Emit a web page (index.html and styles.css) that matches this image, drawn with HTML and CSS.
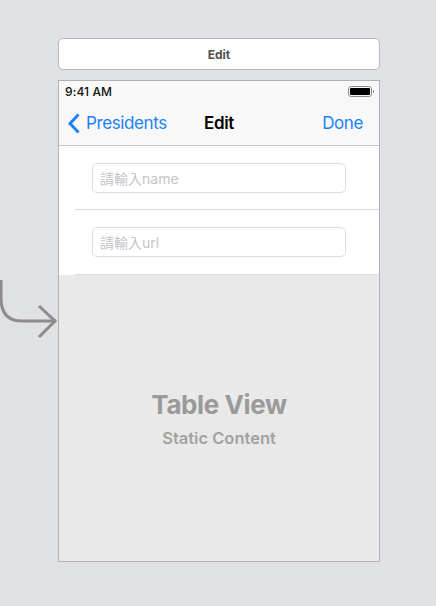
FILE: index.html
```html
<!DOCTYPE html>
<html>
<head>
<meta charset="utf-8">
<link rel="stylesheet" href="styles.css">
</head>
<body>
<svg class="segue" width="60" height="60" viewBox="0 0 60 60">
  <path d="M1 0 V18 Q1 41 22 41 H56" fill="none" stroke="#8c8c8c" stroke-width="3"/>
  <path d="M39 26 L55 41 L39 57" fill="none" stroke="#8c8c8c" stroke-width="3"/>
</svg>
<div class="scene">
  <div class="titlebar">Edit</div>
  <div class="phone">
    <div class="statusbar">
      <span class="time">9:41 AM</span>
      <span class="battery"><span class="cell"></span></span>
    </div>
    <div class="navbar">
      <div class="back">
        <svg width="12" height="21" viewBox="0 0 12 21"><path d="M10.5 1.5 L2 10.5 L10.5 19.5" fill="none" stroke="#1a82fb" stroke-width="3"/></svg>
        <span>Presidents</span>
      </div>
      <div class="navtitle">Edit</div>
      <div class="done">Done</div>
    </div>
    <div class="form">
      <div class="row first"><div class="field">請輸入name</div></div>
      <div class="row"><div class="field">請輸入url</div></div>
    </div>
    <div class="tableview">
      <div class="tv-title">Table View</div>
      <div class="tv-sub">Static Content</div>
    </div>
  </div>
</div>
</body>
</html>
```
FILE: styles.css
```css
html, body {
  margin: 0;
  padding: 0;
  background: #e0e1e5;
  font-family: Inter, "Noto Sans", "Noto Sans CJK TC", sans-serif;
}
body {
  position: relative;
  width: 436px;
  height: 606px;
  overflow: hidden;
}
.segue {
  position: absolute;
  left: 0;
  top: 280px;
}
.scene {
  padding: 38px 0 0 58px;
  width: 322px;
}
.titlebar {
  box-sizing: border-box;
  height: 32px;
  background: #fff;
  border: 1px solid #b9b9bb;
  border-radius: 5px;
  display: flex;
  align-items: center;
  justify-content: center;
  font-size: 12px;
  font-weight: 700;
  color: #505050;
}
.phone {
  box-sizing: border-box;
  margin-top: 10px;
  height: 482px;
  border: 1px solid #b2b2b2;
  background: #e9e9e9;
  display: flex;
  flex-direction: column;
}
.statusbar {
  height: 20px;
  background: #f8f8f8;
  display: flex;
  align-items: center;
  justify-content: space-between;
  padding: 0 7px 0 6px;
}
.time {
  font-size: 12px;
  font-weight: 500;
  color: #111;
  letter-spacing: 0.1px;
}
.battery {
  position: relative;
  box-sizing: border-box;
  width: 24px;
  height: 11px;
  border: 1px solid #8a8a8a;
  border-radius: 3px;
  padding: 1px;
  display: flex;
}
.battery::after {
  content: "";
  position: absolute;
  right: -3px;
  top: 3px;
  width: 1.5px;
  height: 3px;
  background: #8a8a8a;
}
.cell {
  flex: 1;
  background: #000;
  border-radius: 1px;
}
.navbar {
  height: 44px;
  background: #f8f8f8;
  border-bottom: 1px solid #c8c8c8;
  display: flex;
  align-items: center;
  position: relative;
  padding: 0 16px 0 9px;
  font-size: 17px;
  letter-spacing: -0.4px;
}
.back {
  display: flex;
  align-items: center;
  gap: 6px;
  color: #1a82fb;
}
.back svg { display: block; }
.navtitle {
  position: absolute;
  left: 0;
  right: 0;
  text-align: center;
  font-weight: 600;
  color: #000;
  pointer-events: none;
}
.done {
  margin-left: auto;
  color: #1a82fb;
}
.form {
  background: #fff;
  padding-left: 16px;
}
.row {
  height: 64px;
  border-bottom: 1px solid #dcdcdc;
  display: flex;
  align-items: center;
  padding-left: 17px;
  padding-right: 33px;
}
.row.first {
  height: 63px;
}
.field {
  box-sizing: border-box;
  flex: 1;
  height: 30px;
  border: 1px solid #dedede;
  border-radius: 5px;
  display: flex;
  align-items: center;
  padding-left: 7px;
  font-size: 14px;
  color: #c4c4c8;
  font-family: Inter, "Noto Sans CJK TC", sans-serif;
}
.tableview {
  flex: 1;
  display: flex;
  flex-direction: column;
  align-items: center;
  justify-content: center;
  color: #9a9a9a;
  padding-top: 1px;
}
.tv-title {
  font-size: 26px;
  font-weight: 700;
  line-height: 32px;
  letter-spacing: -0.4px;
}
.tv-sub {
  margin-top: 7px;
  font-size: 16.5px;
  font-weight: 600;
  color: #a2a2a2;
}
```
